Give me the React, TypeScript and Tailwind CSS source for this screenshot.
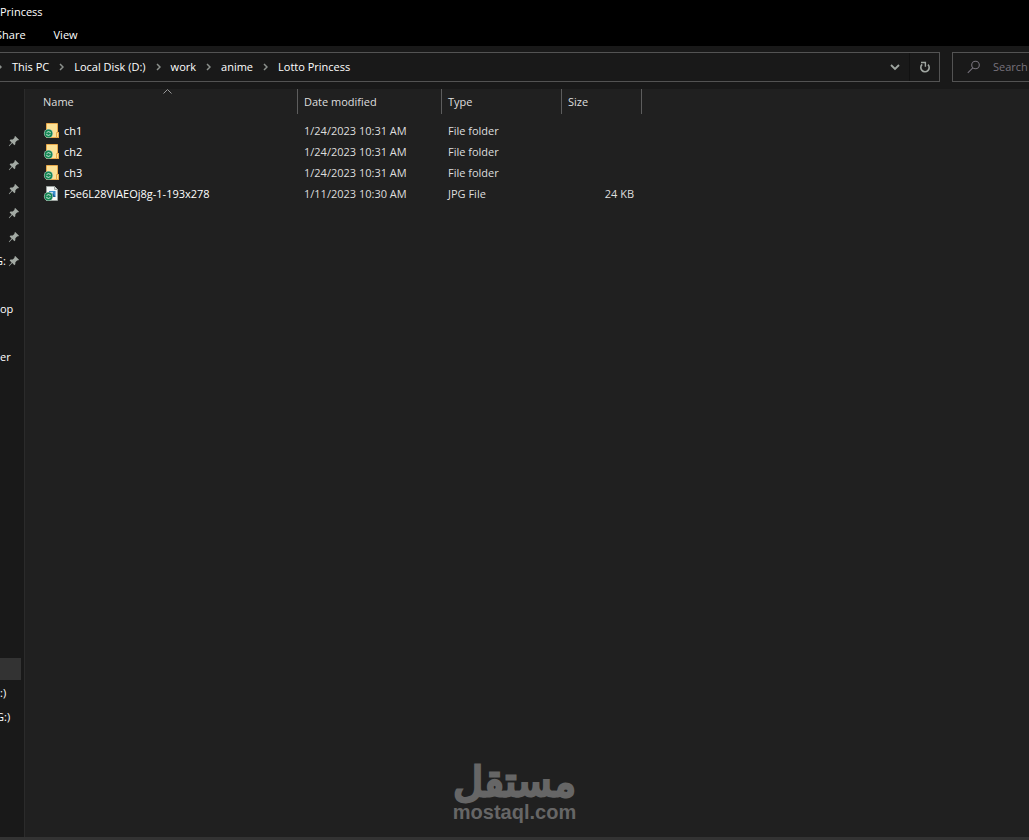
import {Fragment} from "react";

const PATH = ["This PC", "Local Disk (D:)", "work", "anime", "Lotto Princess"];

const FILES = [
    { name: "ch1", date: "1/24/2023 10:31 AM", type: "File folder", size: "", folder: true },
    { name: "ch2", date: "1/24/2023 10:31 AM", type: "File folder", size: "", folder: true },
    { name: "ch3", date: "1/24/2023 10:31 AM", type: "File folder", size: "", folder: true },
    { name: "FSe6L28VIAEOj8g-1-193x278", date: "1/11/2023 10:30 AM", type: "JPG File", size: "24 KB", folder: false },
];

type NavItem = { label?: string, pinned?: boolean, selected?: boolean };

// the tree is scrolled sideways, only the tail of each label is left
const NAV: NavItem[] = [
    { pinned: true },
    { pinned: true },
    { pinned: true },
    { pinned: true },
    { pinned: true },
    { label: "G:", pinned: true },
    {},
    { label: "op" },
    {},
    { label: "er" },
    {}, {}, {}, {}, {}, {}, {}, {}, {}, {}, {}, {},
    { selected: true },
    { label: ":)" },
    { label: "G:)" },
];

function Chevron() {
    return <svg className="h-2 w-[5px] shrink-0" viewBox="0 0 5 8" fill="none" stroke="#8b908c" strokeWidth="1.5">
        <path d="M1 1l3 3-3 3"/>
    </svg>;
}

function Pin() {
    return <svg className="size-3 shrink-0" viewBox="0 0 12 12" fill="#a3aaa4">
        <path d="M7.2 1L11 4.8 10 5.6 9.3 5.3 7.4 7.3 7.3 9.3 6.4 10.2 4.3 8.1 1.2 11.2.8 10.8 3.6 7.4 1.6 5.5 2.5 4.6 4.7 4.5 6.6 2.7 6.3 1.9Z"/>
    </svg>;
}

function SyncBadge() {
    return <g>
        <circle cx="3.5" cy="11.5" r="4.6" fill="#b4c4ba"/>
        <circle cx="3.5" cy="11.5" r="3.9" fill="#138653"/>
        <path d="M1.6 11.2a2 2 0 0 1 3.4-1M5.4 11.8a2 2 0 0 1-3.4 1" fill="none" stroke="#c5e0d2" strokeWidth=".9"/>
        <path d="M5.7 9.4v1.6H4.1zM1.3 13.6V12h1.6z" fill="#c5e0d2"/>
    </g>;
}

function FolderIcon() {
    return <svg className="h-[17px] w-4 shrink-0" viewBox="-2 0 16 17">
        <path d="M1.5 1.5h11v9h1v5h-12z" fill="#fce297" stroke="#e9a94b" strokeWidth="1"/>
        <path d="M11.5 10.5h2v5h-2z" fill="#fce297" stroke="#e9a94b" strokeWidth="1"/>
        <SyncBadge/>
    </svg>;
}

function ImageIcon() {
    return <svg className="h-[17px] w-4 shrink-0" viewBox="-2 0 16 17">
        <path d="M1.5 1.5h8l3 3v11h-11z" fill="#f5f7f6" stroke="#9ca39f" strokeWidth="1"/>
        <path d="M9.5 1.5v3h3" fill="#d7dbd9" stroke="#9ca39f" strokeWidth="1"/>
        <path d="M4 6h6.5v6H4z" fill="#3b8fce"/>
        <path d="M6 12l2-3.5 2.5 3.5z" fill="#1d5f98"/>
        <path d="M5 7h3v1.5H5z" fill="#b9ddf3"/>
        <SyncBadge/>
    </svg>;
}

function AddressBar() {
    return <div className="flex h-[43px] items-start gap-3 bg-[#191919] pt-1.5">
        <nav aria-label="Address" className="flex h-[30px] min-w-0 flex-1 items-center border border-l-0 border-[#535353]">
            <div className="flex flex-1 items-center gap-2.5 overflow-hidden whitespace-nowrap text-white">
                <div className="-ml-[3px] flex"><Chevron/></div>
                {PATH.map((part, i) => <Fragment key={part}>
                    {i > 0 && <Chevron/>}
                    <button type="button">{part}</button>
                </Fragment>)}
            </div>
            <button type="button" aria-label="Previous locations" className="flex h-full w-[29px] items-center justify-center">
                <svg className="h-2 w-2.5" viewBox="0 0 10 8" fill="none" stroke="#a0a6a1" strokeWidth="1.8">
                    <path d="M1 2l4 4 4-4"/>
                </svg>
            </button>
            <button type="button" aria-label="Refresh" className="flex h-full w-[30px] items-center justify-center border-l border-[#111111]">
                <svg className="size-3" viewBox="0 0 12 12" fill="none" stroke="#a0a6a1" strokeWidth="1.6">
                    <path d="M9 3.6A4.2 4.2 0 1 1 3.2 3.4"/>
                    <path d="M2 1.5h4.4v4.2" strokeWidth="1.4"/>
                </svg>
            </button>
        </nav>
        <label className="flex h-[30px] w-[77px] items-center border border-r-0 border-[#535353] pl-3.5">
            <svg className="size-3.5 shrink-0" viewBox="0 0 14 14" fill="none" stroke="#77727c" strokeWidth="1.1">
                <circle cx="8.5" cy="5" r="3.8"/>
                <path d="M5.8 7.8L.8 12.8"/>
            </svg>
            <input type="text" aria-label="Search" placeholder="Search" className="ml-3 w-full min-w-0 bg-transparent outline-none placeholder:text-[#77727c]"/>
        </label>
    </div>;
}

function Sidebar() {
    return <aside className="w-[25px] shrink-0 border-r border-[#2b2b2b] bg-[#191919] pt-10">
        <ul>
            {NAV.map((item, i) => <li key={i} className="flex h-6 items-center overflow-hidden text-white">
                {item.selected && <span className="h-[22px] w-[21px] bg-[#333333]"/>}
                {item.pinned
                    ? <><span className="flex w-2 justify-end pr-0.5">{item.label}</span><Pin/></>
                    : <span className={item.label === "G:)" ? "-ml-1" : ""}>{item.label}</span>}
            </li>)}
        </ul>
    </aside>;
}

function FileList() {
    return <table className="w-[617px] table-fixed border-separate border-spacing-0 self-start text-left">
        <colgroup>
            <col className="w-[273px]"/>
            <col className="w-36"/>
            <col className="w-[120px]"/>
            <col className="w-20"/>
        </colgroup>
        <thead>
            <tr className="h-[25px] text-[#dedede]">
                <th className="relative border-r border-[#5d5d5d] pl-[18px] font-normal">
                    Name
                    <svg className="absolute top-0 left-[138px] h-[5px] w-[9px]" viewBox="0 0 9 5" fill="none" stroke="#9a9a9a">
                        <path d="M.5 4.5l4-4 4 4"/>
                    </svg>
                </th>
                <th className="border-r border-[#5d5d5d] pl-1.5 font-normal">Date modified</th>
                <th className="border-r border-[#5d5d5d] pl-1.5 font-normal">Type</th>
                <th className="border-r border-[#5d5d5d] pl-1.5 font-normal">Size</th>
            </tr>
        </thead>
        <tbody className="before:block before:h-1.5">
            {FILES.map(file => <tr key={file.name} className="h-[21px] whitespace-nowrap text-[#dedede]">
                <td className="pl-[18px] text-white">
                    <div className="flex items-center gap-[5px]">
                        {file.folder ? <FolderIcon/> : <ImageIcon/>}
                        {file.name}
                    </div>
                </td>
                <td className="pl-1.5">{file.date}</td>
                <td className="pl-1.5">{file.type}</td>
                <td className="pr-2 text-right">{file.size}</td>
            </tr>)}
        </tbody>
    </table>;
}

function Watermark() {
    return <div className="absolute bottom-4 left-1/2 flex -translate-x-1/2 flex-col items-center text-[#666666]">
        <span lang="ar" dir="rtl" className="font-['DejaVu_Sans',sans-serif] text-[41px] leading-9 [-webkit-text-stroke:3px_#666666]">مستقل</span>
        <span className="font-['Liberation_Sans',sans-serif] text-[20px] leading-6 font-bold">mostaql.com</span>
    </div>;
}

export default function App() {
    return <div className="relative flex min-h-screen flex-col overflow-hidden bg-[#202020] font-['Open_Sans','Noto_Sans',sans-serif] text-[11px] leading-4 text-[#e4e4e4]">
        <header className="h-[46px] bg-black text-white">
            <h1 className="h-6 pt-1">Princess</h1>
            <div className="flex gap-7 pt-[3px]">
                <button type="button" className="-ml-1">Share</button>
                <button type="button">View</button>
            </div>
        </header>
        <AddressBar/>
        <main className="flex flex-1">
            <Sidebar/>
            <FileList/>
        </main>
        <footer className="h-[3px] bg-[#333333]"/>
        <Watermark/>
    </div>;
}
